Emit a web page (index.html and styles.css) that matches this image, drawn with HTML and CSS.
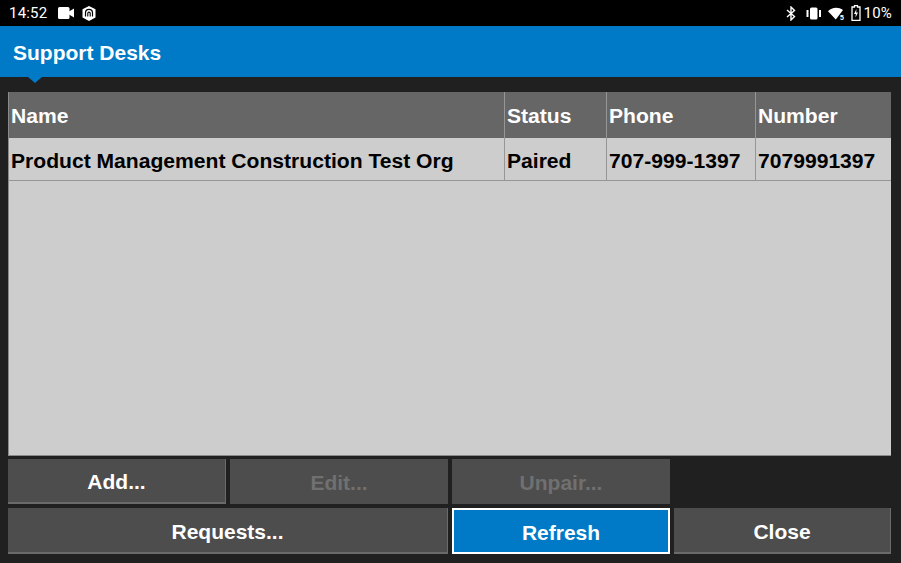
FILE: index.html
```html
<!DOCTYPE html>
<html lang="en">
<head>
<meta charset="utf-8">
<title>Support Desks</title>
<link rel="stylesheet" href="styles.css">
</head>
<body>
<div class="app">
  <div class="statusbar">
    <div class="status-left">
      <span class="clock">14:52</span>
      <svg class="ic-video" width="16" height="12" viewBox="0 0 16 12"><rect x="0" y="0" width="11.500" height="12" rx="1.500" fill="#fff"/><path d="M11 4.500 16 1.500V10.500L11 7.500Z" fill="#fff"/></svg>
      <svg class="ic-badge" width="14" height="15" viewBox="0 0 14 15"><path d="M7 0 13.500 3.300V11.500L7 15 .5 11.500V3.300Z" fill="#fff"/><path d="M3.500 10.500V6.800a3.500 3.500 0 0 1 7 0v3.700" fill="none" stroke="#000" stroke-width="1.200"/><path d="M5.800 10.500V7.300a1.200 1.200 0 0 1 2.400 0v3.200" fill="none" stroke="#000" stroke-width="1.100"/></svg>
    </div>
    <div class="status-right">
      <svg class="ic-bt" width="10" height="15" viewBox="0 0 10 15"><path d="M1 4 8.500 10.500 5 14V1L8.500 4.500 1 11" fill="none" stroke="#fff" stroke-width="1.400"/></svg>
      <svg class="ic-vib" width="15" height="13" viewBox="0 0 15 13"><rect x="4" y="0.500" width="7.500" height="12" rx="1.500" fill="#fff"/><rect x="0.500" y="3" width="2" height="7" fill="#fff"/><rect x="13" y="3" width="2" height="7" fill="#fff"/></svg>
      <svg class="ic-wifi" width="18" height="13" viewBox="0 0 18 13"><path d="M0 4.300C3.500 .3 10 -.7 15 3L7.800 12.500Z" fill="#fff"/><text x="12" y="12.500" class="wifi-s">5</text></svg>
      <svg class="ic-batt" width="10" height="16" viewBox="0 0 10 16"><path d="M3.500 .7H6.500V2H9V15.300H1V2H3.500Z" fill="none" stroke="#fff" stroke-width="1.300"/><path d="M5.500 4 3 9H4.800L4.500 12.500 7 7.500H5.200Z" fill="#fff"/></svg>
      <span class="pct">10%</span>
    </div>
  </div>
  <header class="titlebar"><h1 class="title">Support Desks</h1></header>
  <main class="content">
    <div class="table">
      <div class="row head">
        <div class="cell">Name</div>
        <div class="cell">Status</div>
        <div class="cell">Phone</div>
        <div class="cell">Number</div>
      </div>
      <div class="row body-row">
        <div class="cell">Product Management Construction Test Org</div>
        <div class="cell">Paired</div>
        <div class="cell">707-999-1397</div>
        <div class="cell">7079991397</div>
      </div>
    </div>
    <div class="buttons">
      <button class="btn normal">Add...</button>
      <button class="btn disabled">Edit...</button>
      <button class="btn disabled">Unpair...</button>
      <span></span>
      <button class="btn normal span2">Requests...</button>
      <button class="btn primary">Refresh</button>
      <button class="btn normal">Close</button>
    </div>
  </main>
</div>
</body>
</html>
```

FILE: styles.css
```css
* { box-sizing: border-box; }
html, body { margin: 0; padding: 0; }
body { width: 901px; height: 563px; overflow: hidden; background: #202020; font-family: "Liberation Sans", Arial, sans-serif; }
.app { display: flex; flex-direction: column; height: 563px; }
.statusbar { height: 26px; background: #000; color: #fff; display: flex; justify-content: space-between; align-items: center; padding: 0 9px 0 9px; flex: none; }
.status-left, .status-right { display: flex; align-items: center; }
.clock { font-family: Roboto, sans-serif; font-size: 15px; letter-spacing: .2px; margin-right: 11px; }
.ic-video { margin-right: 8px; }
.ic-bt { margin-right: 10px; }
.ic-vib { margin-right: 7px; }
.ic-wifi { margin-right: 5px; }
.ic-batt { margin-right: 3px; }
.wifi-s { font: bold 7px "Liberation Sans", sans-serif; fill: #fff; }
.pct { font-family: Roboto, sans-serif; font-size: 15px; letter-spacing: .2px; }
.titlebar { position: relative; height: 51px; background: #007ac6; display: flex; align-items: center; padding: 2px 13px 0; flex: none; }
.titlebar::after { content: ""; position: absolute; left: 28px; top: 51px; border-left: 7px solid transparent; border-right: 7px solid transparent; border-top: 6px solid #007ac6; }
.title { margin: 0; font-size: 21px; font-weight: bold; color: #fff; }
.content { flex: 1; display: flex; flex-direction: column; padding: 15px 10px 9px 8px; min-height: 0; }
.table { flex: none; height: 364px; background: #cdcdcd; border: 1px solid #8a8a8a; border-width: 0 0 1px 1px; }
.row { display: grid; grid-template-columns: 496px 102px 149px 1fr; }
.head { height: 46px; background: #666; color: #fff; }
.body-row { height: 43px; color: #000; border-bottom: 1px solid #969696; }
.cell { font-size: 21.1px; font-weight: bold; display: flex; align-items: center; padding: 1px 0 0 2px; border-right: 1px solid #969696; white-space: nowrap; overflow: hidden; }
.body-row .cell { padding-top: 3px; }
.cell:last-child { border-right: 0; }
.buttons { display: grid; grid-template-columns: repeat(3, 218px) 217px; grid-template-rows: 45px 46px; gap: 4px; margin-top: 3px; }
.btn { font-family: inherit; font-size: 21px; font-weight: bold; background: #4d4d4d; color: #fff; border: 1px solid #4d4d4d; padding: 3px 0 0; }
.normal { border-color: #6a6a6a; border-width: 0 1px 2px 0; }
.disabled { color: #707070; }
.primary { background: #007ac6; border: 2px solid #fff; }
.span2 { grid-column: span 2; }
```
